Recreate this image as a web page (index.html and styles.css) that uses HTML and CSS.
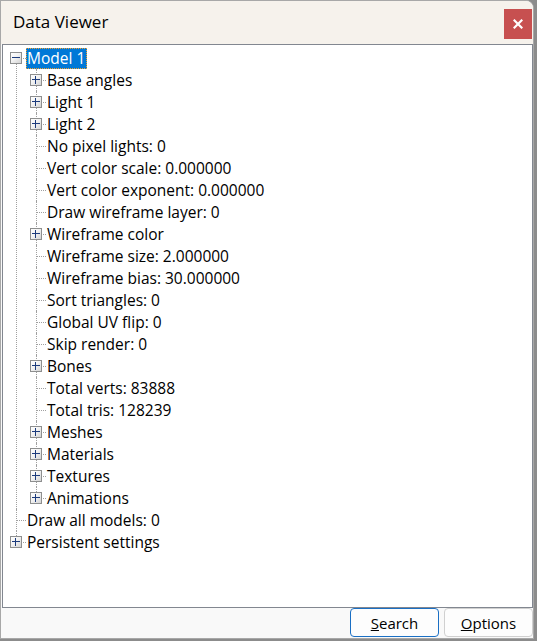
FILE: index.html
```html
<!DOCTYPE html>
<html>
<head>
<meta charset="utf-8">
<link rel="stylesheet" href="styles.css">
</head>
<body>
<div class="window">
  <div class="titlebar">
    <span class="title">Data Viewer</span>
    <button class="close" aria-label="Close">
      <svg width="10" height="10" viewBox="0 0 10 10"><path d="M1.5 1.5 L8.5 8.5 M8.5 1.5 L1.5 8.5" stroke="#fff" stroke-width="2.2" stroke-linecap="square"/></svg>
    </button>
  </div>
  <div class="panel">
    <ul class="tree root">
      <li class="open">
        <div class="row"><span class="exp minus"></span><span class="label selected">Model 1</span></div>
        <ul class="tree">
          <li><div class="row"><span class="exp plus"></span><span class="label">Base angles</span></div></li>
          <li><div class="row"><span class="exp plus"></span><span class="label">Light 1</span></div></li>
          <li><div class="row"><span class="exp plus"></span><span class="label">Light 2</span></div></li>
          <li><div class="row"><span class="exp"></span><span class="label">No pixel lights: 0</span></div></li>
          <li><div class="row"><span class="exp"></span><span class="label">Vert color scale: 0.000000</span></div></li>
          <li><div class="row"><span class="exp"></span><span class="label">Vert color exponent: 0.000000</span></div></li>
          <li><div class="row"><span class="exp"></span><span class="label">Draw wireframe layer: 0</span></div></li>
          <li><div class="row"><span class="exp plus"></span><span class="label">Wireframe color</span></div></li>
          <li><div class="row"><span class="exp"></span><span class="label">Wireframe size: 2.000000</span></div></li>
          <li><div class="row"><span class="exp"></span><span class="label">Wireframe bias: 30.000000</span></div></li>
          <li><div class="row"><span class="exp"></span><span class="label">Sort triangles: 0</span></div></li>
          <li><div class="row"><span class="exp"></span><span class="label">Global UV flip: 0</span></div></li>
          <li><div class="row"><span class="exp"></span><span class="label">Skip render: 0</span></div></li>
          <li><div class="row"><span class="exp plus"></span><span class="label">Bones</span></div></li>
          <li><div class="row"><span class="exp"></span><span class="label">Total verts: 83888</span></div></li>
          <li><div class="row"><span class="exp"></span><span class="label">Total tris: 128239</span></div></li>
          <li><div class="row"><span class="exp plus"></span><span class="label">Meshes</span></div></li>
          <li><div class="row"><span class="exp plus"></span><span class="label">Materials</span></div></li>
          <li><div class="row"><span class="exp plus"></span><span class="label">Textures</span></div></li>
          <li><div class="row"><span class="exp plus"></span><span class="label">Animations</span></div></li>
        </ul>
      </li>
      <li><div class="row"><span class="exp"></span><span class="label">Draw all models: 0</span></div></li>
      <li><div class="row"><span class="exp plus"></span><span class="label">Persistent settings</span></div></li>
    </ul>
  </div>
  <div class="footer">
    <button class="btn default"><u>S</u>earch</button>
    <button class="btn"><u>O</u>ptions</button>
  </div>
</div>
</body>
</html>
```
FILE: styles.css
```css
html, body {
  margin: 0;
  padding: 0;
}
body {
  width: 537px;
  height: 641px;
  background: #8c8c8c;
  font-family: "Open Sans", "Noto Sans", sans-serif;
  overflow: hidden;
}
.window {
  width: 532px;
  height: 637px;
  background: #f9f9f9;
  border: 1px solid #a8a8a8;
  border-top-right-radius: 8px;
  display: flex;
  flex-direction: column;
  overflow: hidden;
}
.titlebar {
  height: 43px;
  flex: none;
  background: #f6f2ec;
  display: flex;
  align-items: center;
  justify-content: space-between;
  padding-left: 12px;
  padding-right: 1px;
}
.title {
  font-size: 17px;
  color: #000;
  margin-top: -2px;
}
.close {
  width: 28px;
  height: 30px;
  margin-top: 2px;
  background: #c75050;
  border: none;
  padding: 0;
  display: flex;
  align-items: center;
  justify-content: center;
}
.panel {
  flex: 1;
  margin-left: 1px;
  background: #fff;
  border: 1px solid #828790;
  overflow: hidden;
  padding-top: 2px;
}
.tree {
  list-style: none;
  margin: 0;
  padding: 0;
}
.tree.root {
  padding-left: 3px;
}
.tree .tree {
  margin-left: 20px;
}
.tree li {
  position: relative;
}
/* vertical connector */
.tree li::before {
  content: "";
  position: absolute;
  left: 10px;
  top: 0;
  bottom: 0;
  border-left: 1px dotted #a0a0a0;
}
.tree li:last-child::before {
  bottom: auto;
  height: 11px;
}
.tree.root > li:first-child::before {
  top: 11px;
}
.row {
  position: relative;
  display: flex;
  align-items: center;
  height: 22px;
}
/* horizontal connector */
.row::before {
  content: "";
  position: absolute;
  left: 11px;
  width: 9px;
  top: 11px;
  border-top: 1px dotted #a0a0a0;
}
.exp {
  position: relative;
  z-index: 1;
  width: 20px;
  height: 22px;
  flex: none;
}
.exp.plus::before,
.exp.minus::before {
  content: "";
  position: absolute;
  left: 4px;
  top: 5px;
  width: 12px;
  height: 12px;
  box-sizing: border-box;
  border: 1px solid #8e8f8f;
}
.exp.plus::before {
  background:
    linear-gradient(#1c3b7c, #1c3b7c) no-repeat 4px 1px / 1px 8px,
    linear-gradient(#1c3b7c, #1c3b7c) no-repeat 1px 4px / 8px 1px,
    linear-gradient(135deg, #ffffff 0%, #f2f2f2 45%, #d4d4d4 100%);
}
.exp.minus::before {
  background:
    linear-gradient(#1c3b7c, #1c3b7c) no-repeat 1px 4px / 8px 1px,
    linear-gradient(135deg, #ffffff 0%, #f2f2f2 45%, #d4d4d4 100%);
}
.label {
  font-size: 15.5px;
  color: #000;
  padding: 0 2px 0 1px;
  line-height: 21px;
  height: 21px;
  white-space: nowrap;
  position: relative;
  z-index: 1;
  background: #fff;
}
.label.selected {
  background: #0078d7;
  color: #fff;
  outline: 1px dotted #f0a030;
  outline-offset: -1px;
}
.footer {
  height: 30px;
  flex: none;
  display: flex;
  justify-content: flex-end;
  align-items: flex-start;
  gap: 5px;
}
.btn {
  height: 29px;
  width: 89px;
  font-family: "Open Sans", "Noto Sans", sans-serif;
  font-size: 15px;
  color: #000;
  background: #fdfdfd;
  border: 1px solid #d0d0d0;
  border-radius: 4px;
  padding: 0;
}
.btn.default {
  border-color: #1a6fc4;
}
```
